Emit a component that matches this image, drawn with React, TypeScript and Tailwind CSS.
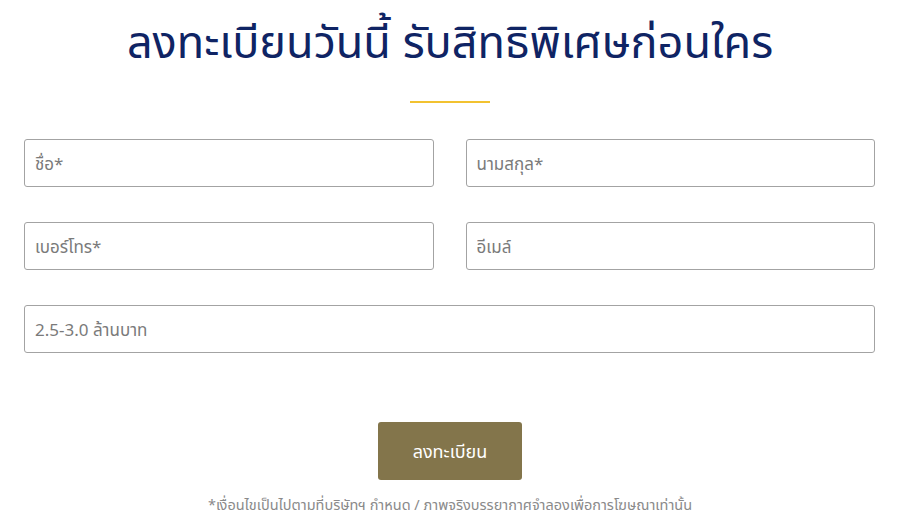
import React from "react";

const font = { fontFamily: '"Noto Sans", "Noto Sans Thai", "Open Sans", sans-serif' };

function Field({ ph, full }: { ph: string; full?: boolean }) {
  return (
    <input
      placeholder={ph}
      className={
        "h-[48px] w-full rounded-[3px] border border-[#a3a3a3] bg-white px-[10px] text-[17px] text-[#555] placeholder:text-[#7a7a7a] outline-none " +
        (full ? "col-span-2" : "")
      }
      style={font}
    />
  );
}

export default function App() {
  return (
    <div className="w-[900px] h-[530px] bg-white overflow-hidden" style={font}>
      <h1 className="pt-[12px] text-center text-[45px] leading-[58px] text-[#0f2464] font-normal">
        ลงทะเบียนวันนี้ รับสิทธิพิเศษก่อนใคร
      </h1>
      <div className="mx-auto mt-[31px] h-[2px] w-[80px] bg-[#f2c230]" />
      <div className="mt-[36px] grid grid-cols-2 gap-x-[32px] gap-y-[35px] pl-[24px] pr-[25px]">
        <Field ph="ชื่อ*" />
        <Field ph="นามสกุล*" />
        <Field ph="เบอร์โทร*" />
        <Field ph="อีเมล์" />
        <Field ph="2.5-3.0 ล้านบาท" full />
      </div>
      <div className="mt-[69px] flex justify-center">
        <button className="h-[58px] w-[144px] rounded-[3px] bg-[#83754b] text-[18px] text-white">
          ลงทะเบียน
        </button>
      </div>
      <p className="mt-[14px] text-center text-[14.5px] text-[#8a8a8a]">
        *เงื่อนไขเป็นไปตามที่บริษัทฯ กำหนด / ภาพจริงบรรยากาศจำลองเพื่อการโฆษณาเท่านั้น
      </p>
    </div>
  );
}
